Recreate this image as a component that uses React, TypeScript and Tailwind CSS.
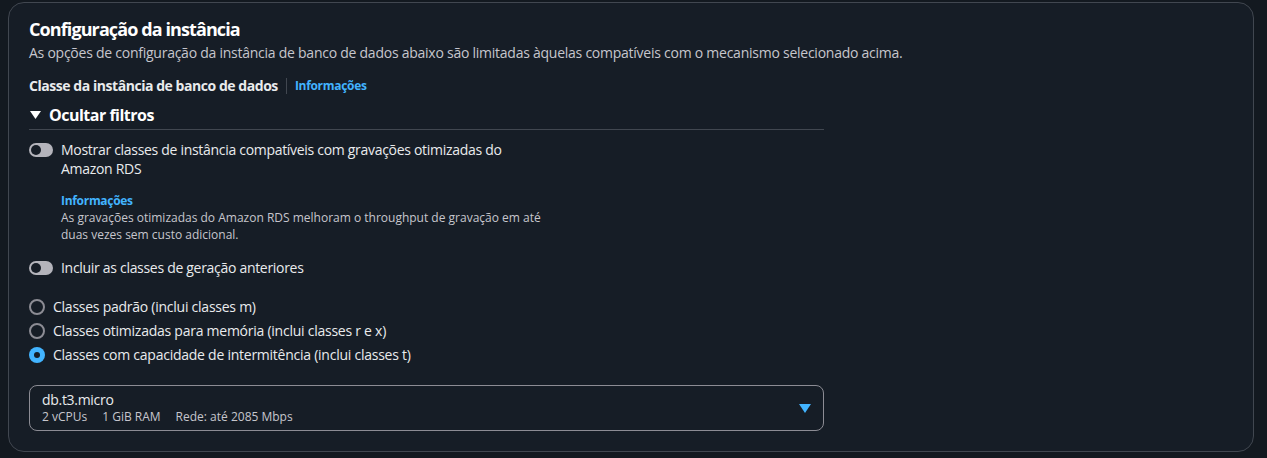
import React from 'react';

const font = { fontFamily: '"Open Sans", "Noto Sans", sans-serif' };

const Toggle = () => (
  <span className="mt-[3px] flex h-[14px] w-[24px] shrink-0 items-center rounded-full bg-[#b4b4bb] px-[2px]">
    <span className="h-[10px] w-[10px] rounded-full bg-[#161d26]" />
  </span>
);

const Radio = ({ checked }: { checked?: boolean }) =>
  checked ? (
    <span className="flex h-[16px] w-[16px] shrink-0 items-center justify-center rounded-full bg-[#42b4ff]">
      <span className="h-[6px] w-[6px] rounded-full bg-[#161d26]" />
    </span>
  ) : (
    <span className="h-[16px] w-[16px] shrink-0 rounded-full border-2 border-[#8c8c94]" />
  );

export default function App() {
  const radios = [
    { label: 'Classes padrão (inclui classes m)', checked: false },
    { label: 'Classes otimizadas para memória (inclui classes r e x)', checked: false },
    { label: 'Classes com capacidade de intermitência (inclui classes t)', checked: true },
  ];

  return (
    <div className="h-[458px] w-full bg-[#131920] pl-[8px] pr-[13px] pt-[2px] pb-[6px]" style={font}>
      <div className="h-full rounded-[16px] border border-[#414750] bg-[#161d26] px-[20px] pt-[13px] text-[#e9ebed]">
        <h2 className="text-[18px] font-bold leading-[27px] tracking-[-0.9px] text-white">Configuração da instância</h2>
        <p className="text-[14px] leading-[20px] tracking-[-0.25px] text-[#c6c6cd]">
          As opções de configuração da instância de banco de dados abaixo são limitadas àquelas compatíveis com o mecanismo selecionado acima.
        </p>

        <div className="mt-[13px] flex items-center text-[14px] font-bold leading-[20px]">
          <span className="tracking-[-0.45px] text-[#e9ebed]">Classe da instância de banco de dados</span>
          <span className="mx-[8px] h-[16px] w-px bg-[#414750]" />
          <span className="text-[12px] tracking-[-0.3px] text-[#42b4ff]">Informações</span>
        </div>

        <div className="w-[795px]">
          <div className="mt-[8px] flex items-center gap-[8px] border-b border-[#414750] pb-[3px] text-[16px] font-bold leading-[22px] text-white">
            <svg width="11" height="9" viewBox="0 0 11 9" className="ml-[1px]">
              <path d="M0 0 H11 L5.5 8 Z" fill="#ffffff" />
            </svg>
            <span className="tracking-[-0.5px]">Ocultar filtros</span>
          </div>

          <div className="mt-[10px] flex gap-[8px]">
            <Toggle />
            <div className="w-[470px] text-[14px] leading-[19px] tracking-[-0.3px] text-[#e9ebed]">
              Mostrar classes de instância compatíveis com gravações otimizadas do Amazon RDS
            </div>
          </div>
          <div className="ml-[32px] mt-[15px] w-[490px]">
            <div className="text-[12px] font-bold leading-[16px] tracking-[-0.3px] text-[#42b4ff]">Informações</div>
            <div className="text-[12px] leading-[17px] text-[#c6c6cd]">
              As gravações otimizadas do Amazon RDS melhoram o throughput de gravação em até duas vezes sem custo adicional.
            </div>
          </div>

          <div className="mt-[15px] flex gap-[8px]">
            <Toggle />
            <div className="text-[14px] leading-[19px] tracking-[-0.3px] text-[#e9ebed]">Incluir as classes de geração anteriores</div>
          </div>

          <div className="mt-[20px] flex flex-col gap-[4px]">
            {radios.map((r) => (
              <div key={r.label} className="flex items-center gap-[8px] text-[14px] leading-[20px] tracking-[-0.25px] text-[#e9ebed]">
                <Radio checked={r.checked} />
                <span>{r.label}</span>
              </div>
            ))}
          </div>

          <div className="mt-[20px] flex h-[46px] items-center rounded-[8px] border border-[#8c8c94] pl-[12px] pr-[12px]">
            <div className="flex-1">
              <div className="text-[14px] leading-[18px] tracking-[-0.3px] text-[#e9ebed]">db.t3.micro</div>
              <div className="flex gap-[15px] text-[12px] leading-[16px] text-[#c6c6cd]">
                <span>2 vCPUs</span>
                <span>1 GiB RAM</span>
                <span>Rede: até 2085 Mbps</span>
              </div>
            </div>
            <svg width="12" height="9" viewBox="0 0 12 9">
              <path d="M0 0 H12 L6 9 Z" fill="#42b4ff" />
            </svg>
          </div>
        </div>
      </div>
    </div>
  );
}
